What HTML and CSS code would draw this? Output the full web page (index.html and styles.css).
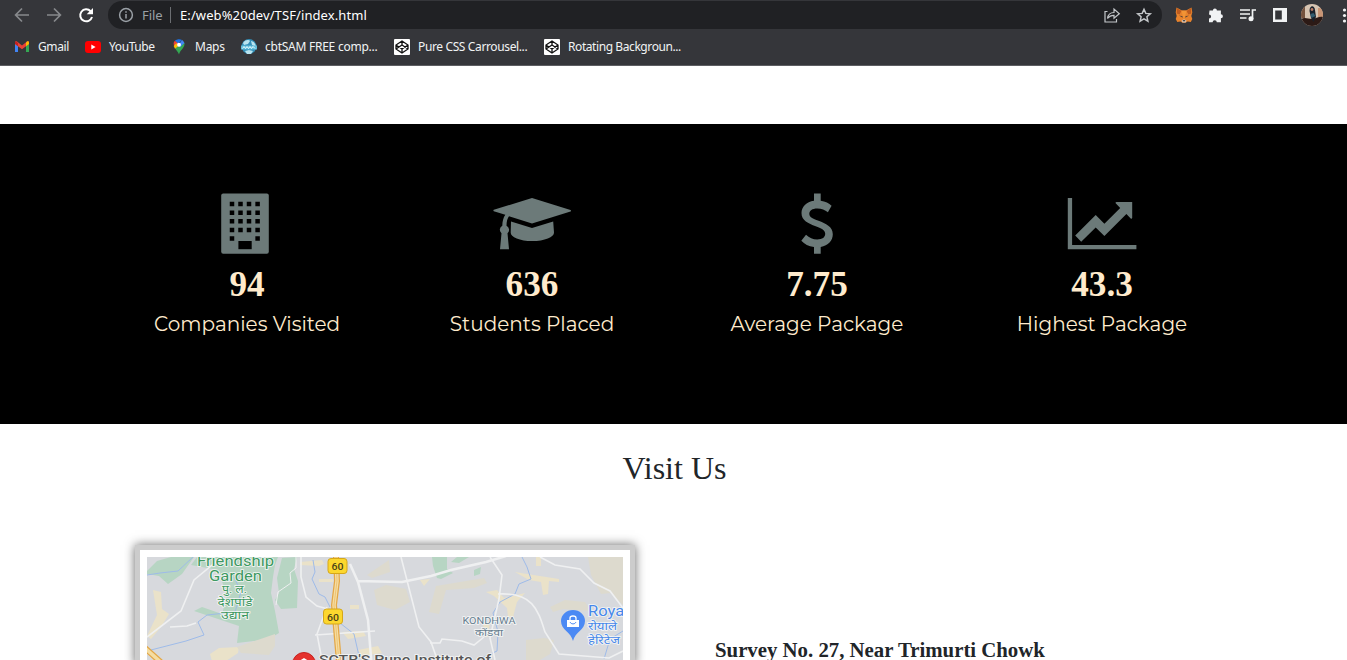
FILE: index.html
```html
<!DOCTYPE html>
<html lang="en">
<head>
<meta charset="utf-8">
<title>TSF</title>
<link rel="stylesheet" href="styles.css">
</head>
<body>
<header class="chrome">
  <div class="toolbar">
    <svg class="nav-icons" width="108" height="30" viewBox="0 0 108 30" fill="none">
      <g stroke="#87898c" stroke-width="1.7"><path d="M29 15H16M22 8.500 15.600 15l6.400 6.500"/><path d="M47 15h13M54 8.500l6.400 6.500-6.400 6.500"/></g>
      <path d="M90.600 11.200A6 6 0 1 0 92 17" stroke="#fff" stroke-width="2"/><path d="M93 8v6.300h-6.300z" fill="#fff"/>
    </svg>
    <div class="address">
      <svg width="16" height="16" viewBox="0 0 16 16" fill="none" stroke="#9aa0a6" stroke-width="1.500"><circle cx="8" cy="8" r="6.400"/><path d="M8 7v4.500M8 4.300v1.500"/></svg>
      <span class="scheme">File</span>
      <span class="divider"></span>
      <span class="url">E:/web%20dev/TSF/index.html</span>
      <svg class="address-actions" width="56" height="28" viewBox="1100 1 56 28" fill="none" stroke="#c4c7ca" stroke-width="1.200">
        <path d="M1107.500 11.500H1105v10.500h11.500V19"/><path d="M1107.500 18.500c.5-4 3-6 6.500-6V9l5.300 4.700-5.300 4.600v-3c-2.700 0-4.700.7-6.500 3.200z"/>
        <path d="m1144 9.300 1.800 4.100 4.500.4-3.400 3 1 4.400-3.900-2.300-3.900 2.300 1-4.400-3.400-3 4.500-.4z" stroke-width="1.500"/>
      </svg>
    </div>
    <svg class="extensions" width="185" height="30" viewBox="1162 0 185 30">
      <path d="m1176.500 7.500 5 2.700h5l5-2.700.8 5-1 3.500 1 3-1.500 3-3.300-.5-2 1.300h-3l-2-1.300-3.200.5-1.600-3 1-3-1-3.500z" fill="#e8832c"/>
      <path d="m1177 8 4.500 3-2 3.500-2.800-1zm14 0-4.500 3 2 3.500 2.800-1z" fill="#bd5b1f"/><path d="m1181.500 11 2.500 9 2.500-9z" fill="#f29435"/><path d="m1179 15.500 3.500.7.200 1.500zm10 0-3.500.7-.2 1.500z" fill="#52413a"/><path d="m1181.500 20.500 2-1h1l2 1-1 2h-3z" fill="#d4c4b8"/><path d="M1182.700 20.200h2.600l-.5 1h-1.600z" fill="#222"/>
      <path d="M1209.500 10.500h3.400a2 2 0 1 1 4 0h4v3.800a2 2 0 1 1 0 4v4h-4.100a2.100 2.100 0 0 0-4.200 0h-3.600v-3.700a2.100 2.100 0 0 0 0-4.200z" fill="#f1f3f4"/>
      <g fill="none" stroke="#f1f3f4" stroke-width="1.700"><path d="M1240 10h10M1240 14h10M1240 18h6.500M1252.500 19v-9h3.500"/></g><circle cx="1251" cy="18.700" r="2.500" fill="#f1f3f4"/>
      <path d="M1273 8h14v14h-14zM1275.200 10.500v9h6.600v-9z" fill="#f1f3f4" fill-rule="evenodd"/>
      <clipPath id="avatar"><circle cx="1312" cy="15" r="11"/></clipPath>
      <g clip-path="url(#avatar)"><path d="M1301 4h22v22h-22z" fill="#d6c4b2"/><path d="M1301 4h4v14h-4z" fill="#75533f"/><path d="M1318 8h6v9h-6z" fill="#c89575"/><path d="M1301 19c4-2 7 0 11 0s7-3 11-2v10h-22z" fill="#2c1a16"/><path d="M1309.500 11c0-6 5-6 5.500-1l1 7-2.500 5-2.500-4z" fill="#18212b"/><circle cx="1312" cy="9.500" r="1.400" fill="#b87963"/><path d="m1310.500 14 3-1 2 3-4 2z" fill="#315c70"/></g>
      <g fill="#f1f3f4"><circle cx="1344.500" cy="10" r="1.600"/><circle cx="1344.500" cy="15.500" r="1.600"/><circle cx="1344.500" cy="21" r="1.600"/></g>
    </svg>
  </div>
  <nav class="bookmarks">
    <a class="bookmark gmail"><svg width="14" height="12" viewBox="0 0 14 12"><path d="M0 2v9h3V5z" fill="#4285f4"/><path d="M11 5v6h3V2z" fill="#34a853"/><path d="M0 3V1.500C0 .4 1.200 0 2 .6L7 4.500 12 .6c.8-.6 2-.2 2 .9V3L7 8.300z" fill="#ea4335"/><path d="M11 1.400 12 .6c.8-.6 2-.2 2 .9V3l-3 2.300z" fill="#fbbc04"/><path d="M0 3V1.500C0 .8.500.4 1 .4l2 1.500v3.400z" fill="#c5221f"/></svg><span>Gmail</span></a>
    <a class="bookmark youtube"><svg width="16" height="12" viewBox="0 0 16 12"><rect width="16" height="12" rx="3" fill="#f00"/><path d="m6.300 3.500 4.300 2.500-4.300 2.500z" fill="#fff"/></svg><span>YouTube</span></a>
    <a class="bookmark maps"><svg width="12" height="16" viewBox="0 0 12 16"><path d="M2 1.600C4 0 7-.4 9 1L4.500 5.500z" fill="#1a73e8"/><path d="M9 1c1.500 1 2.300 2.200 2.400 3.600L5 12 3 9.700z" fill="#4285f4"/><path d="M1.900 1.700 5 4.300 2 8C0 5.500.3 3.200 1.900 1.700z" fill="#ea4335"/><path d="M2 9.300 4 7l3.300 1L11.400 4c.7 5-4.300 6.500-5.400 11.500C5.200 13 3.300 11.300 2 9.300z" fill="#34a853"/><path d="m.7 7 2.800-3L5 7.200l-3 2.500z" fill="#fbbc04"/><circle cx="6" cy="5.800" r="2" fill="#fff"/></svg><span>Maps</span></a>
    <a class="bookmark cbt"><svg width="16" height="16" viewBox="0 0 16 16"><circle cx="8" cy="7.500" r="7.500" fill="#348fb8"/><path d="M2 4c3-4 6-3 7-2L7 5 3 6zM10 2c3 0 5 4 5 6l-4-2zM4 12l4-1 4 1-2 3H6z" fill="#b9e4ef"/><path d="M0 6.500h16v4H0z" fill="#63bfdc"/><path d="M1.500 9.500 3 7.500l1.500 2L6 7.500l1.500 2L9 7.500l1.500 2 1.500-2 2 2" fill="none" stroke="#eefcff"/></svg><span>cbtSAM FREE comp...</span></a>
    <a class="bookmark pure"><svg width="16" height="16" viewBox="0 0 16 16"><rect width="16" height="16" rx="1" fill="#fff"/><path d="m8 2 6 4v4l-6 4-6-4V6zM8 2v4m0 4v4M2 6l6 4 6-4M2 10l6-4 6 4" fill="none" stroke="#111" stroke-width="1.300"/></svg><span>Pure CSS Carrousel...</span></a>
    <a class="bookmark rotating"><svg width="16" height="16" viewBox="0 0 16 16"><rect width="16" height="16" rx="1" fill="#fff"/><path d="m8 2 6 4v4l-6 4-6-4V6zM8 2v4m0 4v4M2 6l6 4 6-4M2 10l6-4 6 4" fill="none" stroke="#111" stroke-width="1.300"/></svg><span>Rotating Backgroun...</span></a>
  </nav>
</header>
<main>
  <section class="stats">
    <div class="stat">
      <svg class="stat-icon" width="80" height="62" viewBox="207 193 80 62"><rect x="221.200" y="193.400" width="47.600" height="60.300" rx="2" fill="#6c7a79"/><path d="M232 204v.01M240.500 204v.01M249 204v.01M257.600 204v.01M232 212.700v.01M240.500 212.700v.01M249 212.700v.01M257.600 212.700v.01M232 221.300v.01M240.500 221.300v.01M249 221.300v.01M257.600 221.300v.01M232 230v.01M240.500 230v.01M249 230v.01M257.600 230v.01M232 238.600v.01M257.600 238.600v.01" stroke="#000" stroke-width="4.500" stroke-linecap="square"/><path d="M238.400 241h13.300v8.200h-13.300z"/></svg>
      <strong class="stat-value">94</strong><span class="stat-label">Companies Visited</span>
    </div>
    <div class="stat">
      <svg class="stat-icon" width="80" height="62" viewBox="492 193 80 62" fill="#6c7a79"><path d="M532 198 570.500 210a.9.900 0 0 1 0 1.500L532 223.500 509 216.200c-1.500 2-2.500 5-2.500 9.500a4.500 4.500 0 0 1 1 7.500l1.500 16h-9l1.500-16a4.500 4.500 0 0 1 .8-7.500c.1-4.500 1-8 3-11l-11.500-3.500a.9.900 0 0 1 0-1.400z"/><path d="m511 221.500 21 6.500 21.200-6.500.8 11c.3 4.700-9.500 8.600-21.800 8.600s-21.800-4-21.500-8.600z"/></svg>
      <strong class="stat-value">636</strong><span class="stat-label">Students Placed</span>
    </div>
    <div class="stat">
      <svg class="stat-icon" width="80" height="62" viewBox="777 193 80 62"><path d="M814 193.500h6.700v7.300c4.700.6 8.200 2.400 10.900 4.900l-3.700 6.500c-3-2.300-6.200-3.800-10.600-3.800-5.200 0-8 2.200-8 5.400 0 3.600 3.400 4.700 9.200 7 7.200 2.800 14.300 5.800 14.300 13.500 0 6.500-4.600 11.400-12.100 12.700v6.700H814v-6.600c-5.500-.7-9.500-3.100-12.700-6.400l4.700-6c3.300 3 6.900 4.800 11.200 4.800 5.300 0 8-2.300 8-5.700 0-3.900-4.200-5.500-9.500-7.500-7.300-2.800-14.200-5.600-14.200-13.200 0-6.400 4.800-11.300 12.500-12.400z" fill="#6c7a79"/></svg>
      <strong class="stat-value">7.75</strong><span class="stat-label">Average Package</span>
    </div>
    <div class="stat">
      <svg class="stat-icon" width="80" height="62" viewBox="1062 193 80 62" fill="#6c7a79"><path d="M1067.800 198h4.300v47h64.300v4.200h-68.600z"/><path d="M1116.500 202h15.700v16c-.2.800-1 1-1.500.4l-4.300-4.400-22 22-8.700-8.600-14.500 14.300-6-6.200 20.500-20.500 8.700 8.700 15.800-15.800-4.300-4.300c-.6-.7-.4-1.400.6-1.600z"/></svg>
      <strong class="stat-value">43.3</strong><span class="stat-label">Highest Package</span>
    </div>
  </section>
  <h2 class="visit-title">Visit Us</h2>
  <section class="visit">
    <div class="map-frame">
      <svg class="map" width="476" height="103" viewBox="147 557 476 103">
        <path d="M147 557h476v120H147z" fill="#d7d9dd"/>
        <g fill="#b7d5c3"><path d="M197 557h81l-3 8-2 12-2 16 4 18 4 22-10 6-32 4 2-17-21-7-24-8 8-4 20 7 5-18-9-26-27-5zM282 558l15-1-3 12 4 12-1 27-16 1-6-9 4-7-2-15zM147 571l10-10 14-4h23l-12 17-14 10-9-8-12-2z"/><path d="M432 557h15v12l6 4-12 6-4-1-4-12zM474 570l7-3-1 7-6 2zM451 562l6-5h12l-10 6z"/></g>
        <g fill="#eae2c9"><path d="m153 590 8 2 1 17 7 5-8 13-10 12-4-3 10-21zM210 654l9-6 20-1-1 6-12 8h-14zM319 579h14v3h-14zM300 562l22-2 2 4-5 2-19-1zM350 605h9v4h-9zM515 572l12 2 32 5v3l-10-1-1 13-5 1-2-13-12-2zM536 557h5v9h-5zM486 592l11-2 7 8 21-5-8 9-4 15h-5l-1-9-13-12zM420 580l10-1-6 7zM148 650l15 10-6 8zM342 632l21-1 3 5-18 3zM358 650l20-4 4 7-20 3zM483 624l7-2-2 15h-3z"/></g>
        <g fill="#dddace"><path d="m237 647 38-13v12l-6 9-28-2zM374 590l12-5 20 4 4 13-15 8-18-5zM436 586l48-8 3 5-13 5-28 2-7 24-10-2zM588 557h35v48l-12-12-10 1-10-19zM550 607l15-7 20 2 6 9-28-2-10 3zM526 640l18-2 10 2-4 14-10 6h-14zM367 575l22-15 1 12-18 6z"/></g>
        <g fill="none" stroke="#9ebbe9"><path d="m147 575 13-2 18-2 15-14M234 577l7 15-6 20-28 3-9 7 6 13-18 6-39 10M313 560l2 12-3 7 7 15 6 3 5 10M522 557l5 10 4 12-12 5-4 10-15 8-7 11 5 19-1 19-15 7v9M340 623l14 11 5 22M623 631l-13 8-6 20"/></g>
        <g fill="none" stroke="#eff0f1"><path d="M222 557 194 580 181 611 147 637M170 627l17-1 9-3M301 557v20l5 20 11 9 11 3M401 557l18 70 12 15 6 17M490 557l12 18-3 24-9 39 5 22M498 594c35-2 40 16 47 38l14 22 50 4 14-7M540 557l15 8 25 4 14 14 16 8 13 17M315 635l60-4M327 607l-10 27 5 26M430 643h10l2-4 20 2 12 4 10-8" stroke-width="1.600"/><path d="m350 564 8 18 10 38 4 50M357 581l45 1 29-6 20-6 35-8 20-6" stroke-width="2.500"/><path d="M276 605l2-13 13-9-1-10 6-5v-11"/></g>
        <g fill="none"><path d="m336 557 1 24-3 24 6 69M145 648l29 26" stroke="#e4a746" stroke-width="6"/><path d="m336 557 1 24-3 24 6 69M145 648l29 26" stroke="#f5dda2" stroke-width="3.500"/><path d="m336 557 1 24-3 24 6 69" stroke="#e9b861" stroke-width=".700"/></g>
        <g fill="#fcd72e" stroke="#d6a719"><rect x="328" y="558.500" width="19" height="15" rx="3"/><rect x="323.500" y="609" width="19" height="15" rx="3"/></g>
        <g class="road-number"><text x="337.500" y="570" textLength="12" lengthAdjust="spacingAndGlyphs">60</text><text x="333" y="620.500" textLength="12" lengthAdjust="spacingAndGlyphs">60</text></g>
        <g class="place-label park-label"><text x="235.500" y="566" textLength="77" lengthAdjust="spacingAndGlyphs">Friendship</text><text x="235.500" y="581" textLength="53" lengthAdjust="spacingAndGlyphs">Garden</text><text class="hindi" x="234.500" y="592.500" textLength="25" lengthAdjust="spacingAndGlyphs">पु. ल.</text><text class="hindi" x="235" y="606" textLength="35" lengthAdjust="spacingAndGlyphs">देशपांडे</text><text class="hindi" x="235" y="619" textLength="28" lengthAdjust="spacingAndGlyphs">उद्यान</text></g>
        <g class="place-label district-label"><text x="489" y="624" textLength="53" lengthAdjust="spacingAndGlyphs">KONDHWA</text><text x="489" y="636" textLength="28" lengthAdjust="spacingAndGlyphs">कोंडवा</text></g>
        <g class="place-label shop-label"><text x="588" y="616" textLength="49" lengthAdjust="spacingAndGlyphs">Royale</text><text class="hindi" x="588" y="630" textLength="29" lengthAdjust="spacingAndGlyphs">रोयाले</text><text class="hindi" x="588" y="644" textLength="32" lengthAdjust="spacingAndGlyphs">हेरिटेज</text></g>
        <path d="M573 641c-2-9-12-11-12-20a12 11 0 0 1 24 0c0 9-10 11-12 20z" fill="#4b89f4"/><path d="M567 620h12v7h-12z" fill="#fff"/><path d="M570 620v-2a3 2 0 0 1 6 0v2" fill="none" stroke="#fff" stroke-width="1.300"/><path d="M570 622c1 2.500 5 2.500 6 0" fill="none" stroke="#4b89f4"/>
        <circle cx="304" cy="664" r="11.500" fill="#e5322d" stroke="#c5221f"/><path d="m304 658 8 5h-16zM298 663h12v6h-12z" fill="#fff"/>
        <text class="place-label college-label" x="319" y="664" textLength="172" lengthAdjust="spacingAndGlyphs">SCTR'S Pune Institute of</text>
      </svg>
    </div>
    <p class="street">Survey No. 27, Near Trimurti Chowk</p>
  </section>
</main>
</body>
</html>
```

FILE: styles.css
```css
* { box-sizing: border-box; }
html, body { height: 100%; }
body { margin: 0; overflow: hidden; background: #fff; color: #212529; font-family: "Liberation Serif", "Times New Roman", serif; }
svg { display: block; flex-shrink: 0; }
.chrome { height: 66px; background: #35363a; border-bottom: 1px solid #5d5e62; color: #f1f3f4; font-family: "Noto Sans", "Open Sans", sans-serif; }
.toolbar { display: flex; height: 30px; }
.address { display: flex; align-items: center; width: 1054px; height: 28px; margin-top: 1px; padding: 0 6px 0 10px; border-radius: 14px; background: #202124; font-size: 13px; white-space: nowrap; }
.scheme { width: 21px; margin-left: 8px; color: #9aa0a6; letter-spacing: -.1px; }
.divider { width: 1px; height: 16px; margin: 0 9px 0 7px; background: #6b6e72; }
.url { color: #fff; letter-spacing: .1px; }
.address-actions { margin-left: auto; }
.bookmarks { display: flex; height: 34px; padding-left: 15px; font-size: 12px; }
.bookmark { display: flex; align-items: center; gap: 9px; height: 34px; white-space: nowrap; }
.bookmark span { padding-bottom: 1px; letter-spacing: -.25px; }
.gmail { width: 70px; }
.youtube { width: 88px; gap: 8px; }
.maps { width: 68px; gap: 10px; }
.cbt { width: 153px; gap: 8px; }
.pure { width: 150px; gap: 8px; }
.rotating { gap: 8px; }
.gmail span, .youtube span { letter-spacing: -.4px; }
.pure span { letter-spacing: -.37px; }
.rotating span { letter-spacing: -.42px; }
main { height: calc(100% - 66px); padding-top: 58px; overflow: hidden; }
.stats { display: flex; justify-content: center; height: 300px; padding: 69px 0 0 2px; background: #000; color: #ffebcd; }
.stat { display: flex; flex-direction: column; align-items: center; width: 285px; }
.stat-icon { margin-right: 1px; }
.stat-value { margin-top: 9px; font-size: 35.2px; line-height: 42px; }
.stat-label { margin-top: 5px; font-family: Montserrat, Inter, sans-serif; font-size: 20px; line-height: 26px; white-space: nowrap; }
.visit-title { margin: 25px 0 0 2px; font-size: 32px; font-weight: 400; line-height: 38px; text-align: center; }
.visit { display: flex; align-items: flex-start; margin-top: 63px; padding-left: 140px; }
.map-frame { width: 490px; height: 110px; padding: 7px 7px 0; background: #fff; box-shadow: 0 0 0 5px #ccc, 0 0 10px 5px #666; }
.street { height: 22px; margin: 88px 0 0 85px; font-size: 20.8px; font-weight: 700; line-height: 24px; white-space: nowrap; }
.place-label { font-family: Roboto, "Noto Sans", sans-serif; paint-order: stroke; stroke: #f4f5f5; stroke-width: 1.6px; }
.park-label { fill: #3d9961; font-size: 15px; text-anchor: middle; }
.hindi { font-size: 11px; }
.district-label { fill: #667d8f; font-size: 9.5px; text-anchor: middle; }
.shop-label { fill: #4788ea; font-size: 14px; }
.college-label { fill: #555; font-size: 13px; font-weight: 500; }
.road-number { fill: #4b4217; font-family: Roboto, sans-serif; font-size: 9.5px; font-weight: 500; text-anchor: middle; }
```
